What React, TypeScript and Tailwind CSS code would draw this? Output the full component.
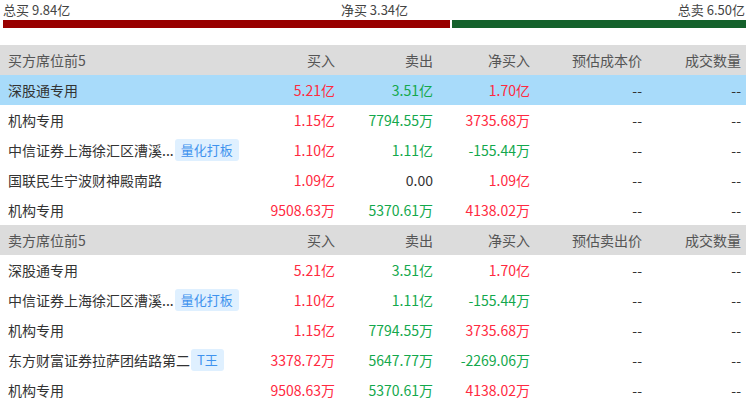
import React from 'react';

type Row = {
  name: string;
  tag?: string;
  buy: string;
  sell: string;
  net: string;
  price: string;
  qty: string;
};

const buyRows: Row[] = [
  { name: '深股通专用', buy: '5.21亿', sell: '3.51亿', net: '1.70亿', price: '--', qty: '--' },
  { name: '机构专用', buy: '1.15亿', sell: '7794.55万', net: '3735.68万', price: '--', qty: '--' },
  { name: '中信证券上海徐汇区漕溪...', tag: '量化打板', buy: '1.10亿', sell: '1.11亿', net: '-155.44万', price: '--', qty: '--' },
  { name: '国联民生宁波财神殿南路', buy: '1.09亿', sell: '0.00', net: '1.09亿', price: '--', qty: '--' },
  { name: '机构专用', buy: '9508.63万', sell: '5370.61万', net: '4138.02万', price: '--', qty: '--' },
];

const sellRows: Row[] = [
  { name: '深股通专用', buy: '5.21亿', sell: '3.51亿', net: '1.70亿', price: '--', qty: '--' },
  { name: '中信证券上海徐汇区漕溪...', tag: '量化打板', buy: '1.10亿', sell: '1.11亿', net: '-155.44万', price: '--', qty: '--' },
  { name: '机构专用', buy: '1.15亿', sell: '7794.55万', net: '3735.68万', price: '--', qty: '--' },
  { name: '东方财富证券拉萨团结路第二', tag: 'T王', buy: '3378.72万', sell: '5647.77万', net: '-2269.06万', price: '--', qty: '--' },
  { name: '机构专用', buy: '9508.63万', sell: '5370.61万', net: '4138.02万', price: '--', qty: '--' },
];

const grid = 'grid grid-cols-[240px_100px_98px_97px_112px_99px] h-[30px] items-center';
const cell = 'text-right pr-[5px] whitespace-nowrap';

const valueColor = (v: string) => {
  if (v === '0.00') return 'text-[#333]';
  return v.startsWith('-') ? 'text-[#13a84c]' : 'text-[#ff2a3f]';
};

const HeaderRow: React.FC<{ title: string; priceLabel: string }> = ({ title, priceLabel }) => (
  <div className={`${grid} bg-[#dcdcdc] text-[#555]`}>
    <div className="pl-2">{title}</div>
    <div className={cell}>买入</div>
    <div className={cell}>卖出</div>
    <div className={cell}>净买入</div>
    <div className={cell}>{priceLabel}</div>
    <div className={cell}>成交数量</div>
  </div>
);

const DataRow: React.FC<{ row: Row; active?: boolean }> = ({ row, active }) => (
  <div className={`${grid} ${active ? 'bg-[#a8dbfa]' : 'bg-white'}`}>
    <div className="pl-2 flex items-center text-[#333] whitespace-nowrap">
      <span>{row.name}</span>
      {row.tag && (
        <span className="ml-[1px] h-[22px] px-[6px] flex items-center rounded-[3px] bg-[#dff0ff] text-[#3f93ee] text-[13px]">
          {row.tag}
        </span>
      )}
    </div>
    <div className={`${cell} text-[#ff2a3f]`}>{row.buy}</div>
    <div className={`${cell} ${row.sell === '0.00' ? 'text-[#333]' : 'text-[#13a84c]'}`}>{row.sell}</div>
    <div className={`${cell} ${valueColor(row.net)}`}>{row.net}</div>
    <div className={`${cell} text-[#333]`}>{row.price}</div>
    <div className={`${cell} text-[#333]`}>{row.qty}</div>
  </div>
);

export default function App() {
  const totalBuy = 9.84;
  const totalSell = 6.5;
  const buyPct = (totalBuy / (totalBuy + totalSell)) * 100;

  return (
    <div className="w-[746px] h-[404px] overflow-hidden bg-white text-[14px] font-['Noto_Sans_CJK_SC','Noto_Sans',sans-serif]">
      <div className="pl-[3px]">
        <div className="flex justify-between items-center h-[18px] text-[13px] text-[#444] leading-none">
          <span className="w-[200px]">总买 9.84亿</span>
          <span>净买 3.34亿</span>
          <span className="w-[200px] text-right pr-[1px]">总卖 6.50亿</span>
        </div>
        <div className="flex h-[8px] mt-[2px] gap-[2px]">
          <div className="bg-[#990000] h-full" style={{ width: `${buyPct}%` }} />
          <div className="bg-[#14612b] h-full flex-1" />
        </div>
      </div>
      <div className="mt-[17px]">
        <HeaderRow title="买方席位前5" priceLabel="预估成本价" />
        {buyRows.map((r, i) => (
          <DataRow key={`b${i}`} row={r} active={i === 0} />
        ))}
        <HeaderRow title="卖方席位前5" priceLabel="预估卖出价" />
        {sellRows.map((r, i) => (
          <DataRow key={`s${i}`} row={r} />
        ))}
      </div>
    </div>
  );
}
